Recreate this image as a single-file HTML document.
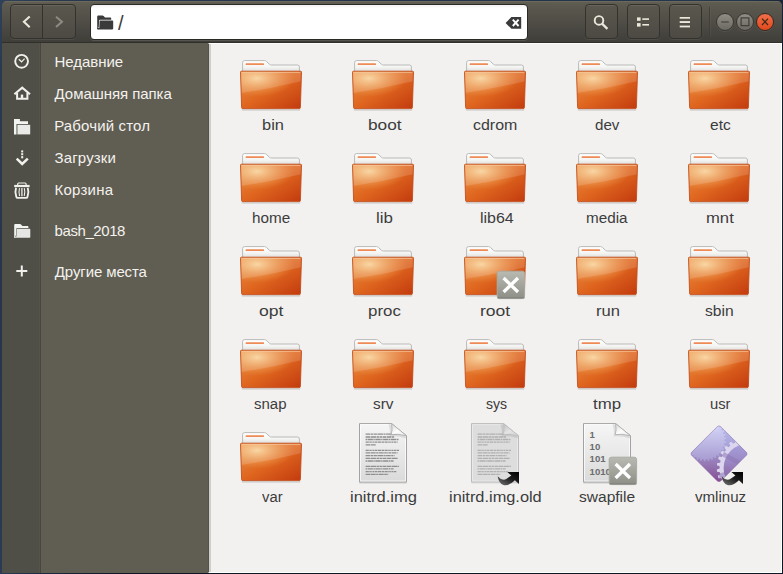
<!DOCTYPE html>
<html lang="ru">
<head>
<meta charset="utf-8">
<title>/</title>
<style>
*{box-sizing:border-box;margin:0;padding:0}
html,body{width:783px;height:574px;overflow:hidden}
body{position:relative;font-family:"Liberation Sans","DejaVu Sans",sans-serif;font-size:15px;
 background:#27354b}
#win{position:absolute;left:2px;top:1px;width:780px;height:572px;border-radius:5px 5px 0 0;overflow:hidden;background:#5a574d}
#hdr{position:absolute;left:0;top:0;width:780px;height:42px;
 background:linear-gradient(180deg,#615e53 0,#5c594f 4px,#4e4c45 22px,#3f3e39 41px);
 box-shadow:inset 0 1px 0 #6b685c,inset 0 -1px 0 #302f2b}
#hdr .btn{position:absolute;top:3.4px;height:35px;border:1px solid #33322d;border-radius:4px;
 background:linear-gradient(180deg,#5a574e 0,#4c4a43 100%);box-shadow:inset 0 1px 0 rgba(255,255,255,.08),0 1px 0 rgba(255,255,255,.07)}
#entry{position:absolute;left:88px;top:3px;width:438px;height:36px;border:1px solid #2b2a26;border-radius:4px;background:linear-gradient(180deg,#f1f1f1 0,#fdfdfd 3px,#fff 6px);box-shadow:0 1px 0 rgba(255,255,255,.11)}
#entry span{position:absolute;left:27px;top:6px;font-size:20px;line-height:24px;color:#3c3c3c}
#side{position:absolute;left:0;top:42px;width:206px;height:530px;background:#605d52}
#strip{position:absolute;left:0;top:0;width:39px;height:530px;background:#504f47;border-right:1px solid #47463f;box-shadow:inset -1px 0 0 #55534b}
.srow{position:absolute;color:#f3f2ee;font-size:15px;line-height:20px;white-space:nowrap}
#content{position:absolute;left:206px;top:42px;width:574px;height:530px;background:#f2f1f0;
 border-left:1px solid #55524a;border-top:1px solid #fcfcfc;border-right:1px solid #fff;border-bottom:1px solid #fff;box-shadow:inset 2px 0 0 #cfcecb}
.lbl{position:absolute;transform-origin:0 50%;color:#3c3c3c;font-size:15.5px;line-height:20px;white-space:nowrap}
.ico{position:absolute;overflow:visible}
.dgt{font-family:"Liberation Sans","DejaVu Sans",sans-serif;font-weight:bold;font-size:9.6px;fill:#6c6c6c}
.wc{position:absolute;top:11.7px;width:18.2px;height:18.2px;border-radius:50%;border:1px solid #383732;background:linear-gradient(180deg,#8f8d84 0,#6b6961 100%);box-shadow:0 1px 0 rgba(255,255,255,.08)}
</style>
</head>
<body>
<svg width="0" height="0" style="position:absolute">
<defs>
<linearGradient id="fb" x1="0" y1="0" x2="0" y2="1"><stop offset="0" stop-color="#fff"/><stop offset=".55" stop-color="#f4f4f3"/><stop offset="1" stop-color="#d9d9d7"/></linearGradient>
<linearGradient id="fo" x1="0" y1="0" x2="1" y2="1"><stop offset="0" stop-color="#ea9044"/><stop offset=".5" stop-color="#df661f"/><stop offset="1" stop-color="#c23a0e"/></linearGradient>
<radialGradient id="fr" cx=".27" cy=".24" r=".62" gradientTransform="scale(1 .8)"><stop offset="0" stop-color="#f9d49a" stop-opacity=".95"/><stop offset="1" stop-color="#f0a050" stop-opacity="0"/></radialGradient>
<linearGradient id="pg" x1="0" y1="0" x2="0" y2="1"><stop offset="0" stop-color="#f6f6f6"/><stop offset="1" stop-color="#dadada"/></linearGradient>
<linearGradient id="pgf" x1="0" y1="0" x2="1" y2="1"><stop offset="0" stop-color="#d8d8d8"/><stop offset=".5" stop-color="#fdfdfd"/><stop offset="1" stop-color="#e6e6e6"/></linearGradient>
<linearGradient id="pgf2" x1="0" y1="0" x2="1" y2="1"><stop offset="0" stop-color="#bdbdbd"/><stop offset=".5" stop-color="#e4e4e4"/><stop offset="1" stop-color="#d2d2d2"/></linearGradient>
<linearGradient id="em" x1="0" y1="0" x2="0" y2="1"><stop offset="0" stop-color="#b9bbb2"/><stop offset="1" stop-color="#8d8f87"/></linearGradient>
<linearGradient id="ar" x1="0" y1="1" x2="1" y2="0"><stop offset="0" stop-color="#7a7a7a"/><stop offset=".55" stop-color="#1c1c1c"/><stop offset="1" stop-color="#000"/></linearGradient>
<linearGradient id="dm" x1="0" y1="0" x2="0" y2="1"><stop offset="0" stop-color="#c6c5ef"/><stop offset=".45" stop-color="#a196cd"/><stop offset=".75" stop-color="#9270ae"/><stop offset="1" stop-color="#864d93"/></linearGradient>
<linearGradient id="dm2" gradientUnits="userSpaceOnUse" x1="0" y1="20" x2="0" y2="58"><stop offset="0" stop-color="#a6a0da"/><stop offset=".5" stop-color="#9a86c2"/><stop offset="1" stop-color="#8b5c9f"/></linearGradient>
<linearGradient id="dg" gradientUnits="userSpaceOnUse" x1="0" y1="2" x2="0" y2="38"><stop offset="0" stop-color="#d6d7f8"/><stop offset="1" stop-color="#aa9fd3"/></linearGradient>
</defs></svg>
<div style="position:absolute;left:0;top:0;width:3px;height:574px;background:linear-gradient(180deg,#2f4259 0,#2a3a51 60px,#27344a 300px,#2a3b53 574px)"></div>
<div style="position:absolute;left:0;top:0;width:783px;height:6px;background:linear-gradient(90deg,#2f4259 0,#27384f 60px,#22324b 400px,#25364f 740px,#1a2538 783px)"></div>
<div style="position:absolute;left:776px;top:6px;width:7px;height:568px;background:linear-gradient(180deg,#18233a 0,#121b2a 40px,#0e1724 568px)"></div>
<div style="position:absolute;left:0;top:573px;width:783px;height:1px;background:linear-gradient(90deg,#2b3d55 0,#1d2a3e 40px,#0e1724 120px)"></div>
<div id="win">
 <div id="hdr">
  <div class="btn" style="left:8px;width:66px"></div>
  <div style="position:absolute;left:40px;top:4px;width:1px;height:33px;background:#33322d"></div>
  <svg class="ico" style="left:8px;top:3px" width="66" height="35" viewBox="0 0 66 35"><path d="M19.7 12.4 L13.9 17.8 L19.7 23.3" fill="none" stroke="#ebe7db" stroke-width="2.1"/><path d="M46 12.8 L52 17.8 L46 23" fill="none" stroke="#8e8b82" stroke-width="2"/></svg>
  <div id="entry"><span>/</span>
   <svg class="ico" style="left:5px;top:9px" width="20" height="18" viewBox="0 0 20 18"><path d="M1.2 2.6 Q1.2 1.6 2.2 1.6 H6.6 Q7.2 1.6 7.6 2 L9 3.5 H14.4 Q15.2 3.5 15.2 4.3 V5.7 H4 Q3.1 5.7 3.1 6.6 L2.8 13.4 L1.9 13.4 L2.3 15.3 H1.2 Z" fill="#3a3a3a"/><path d="M4 6.4 H16.4 Q17.2 6.4 17.2 7.2 V14.6 Q17.2 15.4 16.4 15.4 H2 Q1.2 15.4 1.2 14.6 L1.2 14.1 H3.3 L3.6 6.8 Q3.6 6.4 4 6.4 Z" fill="#3a3a3a"/></svg>
   <svg class="ico" style="left:413px;top:10px" width="20" height="16" viewBox="0 0 20 16"><path d="M1.6 7.9 L7.4 2.1 H17.2 V13.8 H7.4 Z" fill="#3a3a3a"/><path d="M8.8 4.7 L14.6 11 M14.6 4.7 L8.8 11" stroke="#fff" stroke-width="1.9"/></svg>
  </div>
  <div class="btn" style="left:582.5px;width:33px"></div>
  <div class="btn" style="left:624.5px;width:33px"></div>
  <div class="btn" style="left:666.5px;width:33px"></div>
  <svg class="ico" style="left:582px;top:3px" width="120" height="35" viewBox="0 0 120 35"><circle cx="15" cy="16.4" r="4.3" fill="none" stroke="#ebe7db" stroke-width="1.9"/><path d="M18 19.6 L23.4 24.8" stroke="#ebe7db" stroke-width="2.3"/>
  <rect x="53" y="13.4" width="3.6" height="3.4" fill="#ebe7db"/><rect x="53" y="19.1" width="3.6" height="3.5" fill="#ebe7db"/><rect x="58.3" y="14.3" width="6.7" height="1.6" fill="#ebe7db"/><rect x="58.3" y="20" width="6.7" height="1.6" fill="#ebe7db"/>
  <rect x="95.7" y="13" width="10.3" height="1.7" fill="#ebe7db"/><rect x="95.7" y="17.1" width="10.3" height="1.9" fill="#ebe7db"/><rect x="95.7" y="21.6" width="10.3" height="1.8" fill="#ebe7db"/></svg>
  <div style="position:absolute;left:707px;top:6px;width:1px;height:30px;background:#403f39;box-shadow:1px 0 0 rgba(255,255,255,.04)"></div>
  <div class="wc" style="left:713.9px"></div>
  <div class="wc" style="left:733.9px"></div>
  <div class="wc" style="left:753.9px;background:linear-gradient(180deg,#f0704a 0,#e2481c 100%);border-color:#3c2a22"></div>
  <svg class="ico" style="left:713px;top:11px" width="60" height="20" viewBox="0 0 60 20"><path d="M6.2 10 H13.8" stroke="#3a3935" stroke-width="1.2"/><rect x="26.1" y="5.9" width="7.8" height="7.8" fill="none" stroke="#3a3935" stroke-width="1.1"/><path d="M47 6.7 L53 13 M53 6.7 L47 13" stroke="#3a2a16" stroke-width="1.2"/></svg>
 </div>
 <div id="side"><div id="strip"></div>
<svg class="ico" style="left:7.699999999999999px;top:6px" width="24" height="24" viewBox="0 0 24 24"><circle cx="11.6" cy="12.3" r="6.4" fill="none" stroke="#f1f0ec" stroke-width="1.9"/><path d="M8.8 10.2 L11.6 12.8 L14.6 9.7" fill="none" stroke="#f1f0ec" stroke-width="1.2"/></svg>
<div class="srow" style="left:52.4px;top:9px;letter-spacing:-0.027px">Недавние</div>
<svg class="ico" style="left:7.699999999999999px;top:38px" width="24" height="24" viewBox="0 0 24 24"><path d="M4.4 13.3 L12.2 6.6 L20 13.3" fill="none" stroke="#f1f0ec" stroke-width="2.1" stroke-linejoin="miter"/><path d="M7.1 12 V17.7 H17.4 V12" fill="none" stroke="#f1f0ec" stroke-width="2"/><rect x="10.8" y="13.6" width="2.4" height="4.4" fill="#f1f0ec"/></svg>
<div class="srow" style="left:52.6px;top:41px;letter-spacing:-0.054px">Домашняя папка</div>
<svg class="ico" style="left:7.699999999999999px;top:70px" width="24" height="24" viewBox="0 0 24 24"><path d="M4 5.9 H9.9 V8.2 H18 V10.9 H6.5 V21.4 H4 Z" fill="#f3f3f1"/><rect x="7.4" y="11.8" width="12.8" height="9.6" fill="#e9e9e7"/></svg>
<div class="srow" style="left:52.2px;top:73px;letter-spacing:0.146px">Рабочий стол</div>
<svg class="ico" style="left:7.699999999999999px;top:102px" width="24" height="24" viewBox="0 0 24 24"><rect x="11.2" y="5.4" width="2" height="2" fill="#f1f0ec"/><rect x="11.2" y="8.2" width="2" height="2" fill="#f1f0ec"/><rect x="11.2" y="11.1" width="2" height="2.2" fill="#f1f0ec"/><path d="M6.7 13.6 L12.2 19 L17.8 13.6" fill="none" stroke="#f1f0ec" stroke-width="2.5"/></svg>
<div class="srow" style="left:52.6px;top:105px;letter-spacing:0.128px">Загрузки</div>
<svg class="ico" style="left:7.699999999999999px;top:134.6px" width="24" height="24" viewBox="0 0 24 24"><rect x="4.2" y="6.9" width="15.4" height="2.2" fill="#f1f0ec"/><path d="M7.7 6.9 V5.9 Q7.7 5 8.6 5 H15.2 Q16.1 5 16.1 5.9 V6.9" fill="none" stroke="#f1f0ec" stroke-width="1.2"/><path d="M6.1 9.8 Q4.6 14 6.3 18.7 Q6.6 19.9 7.8 19.9 H16 Q17.2 19.9 17.5 18.7 Q19.2 14 17.7 9.8" fill="none" stroke="#f1f0ec" stroke-width="1.9"/><path d="M11.9 10 V18.2" stroke="#f1f0ec" stroke-width="1.3"/><path d="M9.5 10.2 Q8.4 14.2 9.6 18 M14.3 10.2 Q15.4 14.2 14.2 18" fill="none" stroke="#f1f0ec" stroke-width="1.1"/></svg>
<div class="srow" style="left:52.6px;top:137px;letter-spacing:0.21px">Корзина</div>
<svg class="ico" style="left:7.699999999999999px;top:175.9px" width="24" height="24" viewBox="0 0 24 24"><path d="M4.2 6 Q4.2 5 5.2 5 H10 Q10.6 5 11 5.4 L12.4 6.9 H17.6 Q18.4 6.9 18.4 7.7 V9.1 H7.2 Q6.3 9.1 6.3 10 L6 16.8 L5 16.8 L5.4 18.7 H4.2 Z" fill="#f3f3f1"/><path d="M7 9.7 H19.6 Q20.3 9.7 20.3 10.4 V18 Q20.3 18.8 19.5 18.8 H5 Q4.3 18.8 4.3 18 L4.3 17.4 H6.4 L6.7 10 Q6.7 9.7 7 9.7 Z" fill="#e6e6e4"/></svg>
<div class="srow" style="left:52.6px;top:178px;letter-spacing:-0.426px">bash_2018</div>
<svg class="ico" style="left:7.699999999999999px;top:216.39999999999998px" width="24" height="24" viewBox="0 0 24 24"><path d="M6.3 12 H17.3 M11.8 6.5 V17.5" stroke="#f1f0ec" stroke-width="2"/></svg>
<div class="srow" style="left:52.8px;top:219px;letter-spacing:-0.114px">Другие места</div>
 </div>
 <div id="content"></div>
<svg class="ico" style="left:236px;top:56px" width="66" height="56" viewBox="0 0 66 56">
<path d="M3.4 52 L62.6 52 L62 53.7 L4 53.7 Z" fill="#000" opacity=".12"/>
<path d="M4.6 15.5 V5.6 Q4.6 3.6 6.6 3.6 H26.4 Q27.6 3.6 28.4 4.4 L31.6 7.4 Q32.3 8 33.4 8 H59.4 Q61.4 8 61.4 10 V15.5 Z" fill="url(#fb)" stroke="#b9b9b7" stroke-width="1"/>
<rect x="7.6" y="6.3" width="18.4" height="1.7" rx=".6" fill="#ee8b56"/>
<path d="M2.5 15.2 Q2.5 14.2 3.5 14.2 H62.5 Q63.5 14.2 63.5 15.2 L62.4 50.4 Q62.3 51.6 61.2 51.6 H4.8 Q3.7 51.6 3.6 50.4 Z" fill="url(#fo)"/>
<path d="M2.5 15.2 Q2.5 14.2 3.5 14.2 H62.5 Q63.5 14.2 63.5 15.2 L62.4 50.4 Q62.3 51.6 61.2 51.6 H4.8 Q3.7 51.6 3.6 50.4 Z" fill="url(#fr)"/>
<path d="M3 15 H63 L62.75 24.2 Q33 31.4 3.45 36 Z" fill="#fff" opacity=".15"/>
<path d="M2.5 15.2 Q2.5 14.2 3.5 14.2 H62.5 Q63.5 14.2 63.5 15.2 L62.4 50.4 Q62.3 51.6 61.2 51.6 H4.8 Q3.7 51.6 3.6 50.4 Z" fill="none" stroke="#c24a18" stroke-width="1" opacity=".85"/>
<path d="M3.8 15.4 H62.2" stroke="#f6c9a0" stroke-width=".9" opacity=".8" fill="none"/>
</svg>
<div class="lbl" style="left:260.0px;top:114px;transform:scaleX(1.0595)">bin</div>
<svg class="ico" style="left:348px;top:56px" width="66" height="56" viewBox="0 0 66 56">
<path d="M3.4 52 L62.6 52 L62 53.7 L4 53.7 Z" fill="#000" opacity=".12"/>
<path d="M4.6 15.5 V5.6 Q4.6 3.6 6.6 3.6 H26.4 Q27.6 3.6 28.4 4.4 L31.6 7.4 Q32.3 8 33.4 8 H59.4 Q61.4 8 61.4 10 V15.5 Z" fill="url(#fb)" stroke="#b9b9b7" stroke-width="1"/>
<rect x="7.6" y="6.3" width="18.4" height="1.7" rx=".6" fill="#ee8b56"/>
<path d="M2.5 15.2 Q2.5 14.2 3.5 14.2 H62.5 Q63.5 14.2 63.5 15.2 L62.4 50.4 Q62.3 51.6 61.2 51.6 H4.8 Q3.7 51.6 3.6 50.4 Z" fill="url(#fo)"/>
<path d="M2.5 15.2 Q2.5 14.2 3.5 14.2 H62.5 Q63.5 14.2 63.5 15.2 L62.4 50.4 Q62.3 51.6 61.2 51.6 H4.8 Q3.7 51.6 3.6 50.4 Z" fill="url(#fr)"/>
<path d="M3 15 H63 L62.75 24.2 Q33 31.4 3.45 36 Z" fill="#fff" opacity=".15"/>
<path d="M2.5 15.2 Q2.5 14.2 3.5 14.2 H62.5 Q63.5 14.2 63.5 15.2 L62.4 50.4 Q62.3 51.6 61.2 51.6 H4.8 Q3.7 51.6 3.6 50.4 Z" fill="none" stroke="#c24a18" stroke-width="1" opacity=".85"/>
<path d="M3.8 15.4 H62.2" stroke="#f6c9a0" stroke-width=".9" opacity=".8" fill="none"/>
</svg>
<div class="lbl" style="left:365.91px;top:114px;transform:scaleX(1.113)">boot</div>
<svg class="ico" style="left:460px;top:56px" width="66" height="56" viewBox="0 0 66 56">
<path d="M3.4 52 L62.6 52 L62 53.7 L4 53.7 Z" fill="#000" opacity=".12"/>
<path d="M4.6 15.5 V5.6 Q4.6 3.6 6.6 3.6 H26.4 Q27.6 3.6 28.4 4.4 L31.6 7.4 Q32.3 8 33.4 8 H59.4 Q61.4 8 61.4 10 V15.5 Z" fill="url(#fb)" stroke="#b9b9b7" stroke-width="1"/>
<rect x="7.6" y="6.3" width="18.4" height="1.7" rx=".6" fill="#ee8b56"/>
<path d="M2.5 15.2 Q2.5 14.2 3.5 14.2 H62.5 Q63.5 14.2 63.5 15.2 L62.4 50.4 Q62.3 51.6 61.2 51.6 H4.8 Q3.7 51.6 3.6 50.4 Z" fill="url(#fo)"/>
<path d="M2.5 15.2 Q2.5 14.2 3.5 14.2 H62.5 Q63.5 14.2 63.5 15.2 L62.4 50.4 Q62.3 51.6 61.2 51.6 H4.8 Q3.7 51.6 3.6 50.4 Z" fill="url(#fr)"/>
<path d="M3 15 H63 L62.75 24.2 Q33 31.4 3.45 36 Z" fill="#fff" opacity=".15"/>
<path d="M2.5 15.2 Q2.5 14.2 3.5 14.2 H62.5 Q63.5 14.2 63.5 15.2 L62.4 50.4 Q62.3 51.6 61.2 51.6 H4.8 Q3.7 51.6 3.6 50.4 Z" fill="none" stroke="#c24a18" stroke-width="1" opacity=".85"/>
<path d="M3.8 15.4 H62.2" stroke="#f6c9a0" stroke-width=".9" opacity=".8" fill="none"/>
</svg>
<div class="lbl" style="left:470.86px;top:114px;transform:scaleX(1.0303)">cdrom</div>
<svg class="ico" style="left:572px;top:56px" width="66" height="56" viewBox="0 0 66 56">
<path d="M3.4 52 L62.6 52 L62 53.7 L4 53.7 Z" fill="#000" opacity=".12"/>
<path d="M4.6 15.5 V5.6 Q4.6 3.6 6.6 3.6 H26.4 Q27.6 3.6 28.4 4.4 L31.6 7.4 Q32.3 8 33.4 8 H59.4 Q61.4 8 61.4 10 V15.5 Z" fill="url(#fb)" stroke="#b9b9b7" stroke-width="1"/>
<rect x="7.6" y="6.3" width="18.4" height="1.7" rx=".6" fill="#ee8b56"/>
<path d="M2.5 15.2 Q2.5 14.2 3.5 14.2 H62.5 Q63.5 14.2 63.5 15.2 L62.4 50.4 Q62.3 51.6 61.2 51.6 H4.8 Q3.7 51.6 3.6 50.4 Z" fill="url(#fo)"/>
<path d="M2.5 15.2 Q2.5 14.2 3.5 14.2 H62.5 Q63.5 14.2 63.5 15.2 L62.4 50.4 Q62.3 51.6 61.2 51.6 H4.8 Q3.7 51.6 3.6 50.4 Z" fill="url(#fr)"/>
<path d="M3 15 H63 L62.75 24.2 Q33 31.4 3.45 36 Z" fill="#fff" opacity=".15"/>
<path d="M2.5 15.2 Q2.5 14.2 3.5 14.2 H62.5 Q63.5 14.2 63.5 15.2 L62.4 50.4 Q62.3 51.6 61.2 51.6 H4.8 Q3.7 51.6 3.6 50.4 Z" fill="none" stroke="#c24a18" stroke-width="1" opacity=".85"/>
<path d="M3.8 15.4 H62.2" stroke="#f6c9a0" stroke-width=".9" opacity=".8" fill="none"/>
</svg>
<div class="lbl" style="left:592.78px;top:114px;transform:scaleX(0.9765)">dev</div>
<svg class="ico" style="left:684px;top:56px" width="66" height="56" viewBox="0 0 66 56">
<path d="M3.4 52 L62.6 52 L62 53.7 L4 53.7 Z" fill="#000" opacity=".12"/>
<path d="M4.6 15.5 V5.6 Q4.6 3.6 6.6 3.6 H26.4 Q27.6 3.6 28.4 4.4 L31.6 7.4 Q32.3 8 33.4 8 H59.4 Q61.4 8 61.4 10 V15.5 Z" fill="url(#fb)" stroke="#b9b9b7" stroke-width="1"/>
<rect x="7.6" y="6.3" width="18.4" height="1.7" rx=".6" fill="#ee8b56"/>
<path d="M2.5 15.2 Q2.5 14.2 3.5 14.2 H62.5 Q63.5 14.2 63.5 15.2 L62.4 50.4 Q62.3 51.6 61.2 51.6 H4.8 Q3.7 51.6 3.6 50.4 Z" fill="url(#fo)"/>
<path d="M2.5 15.2 Q2.5 14.2 3.5 14.2 H62.5 Q63.5 14.2 63.5 15.2 L62.4 50.4 Q62.3 51.6 61.2 51.6 H4.8 Q3.7 51.6 3.6 50.4 Z" fill="url(#fr)"/>
<path d="M3 15 H63 L62.75 24.2 Q33 31.4 3.45 36 Z" fill="#fff" opacity=".15"/>
<path d="M2.5 15.2 Q2.5 14.2 3.5 14.2 H62.5 Q63.5 14.2 63.5 15.2 L62.4 50.4 Q62.3 51.6 61.2 51.6 H4.8 Q3.7 51.6 3.6 50.4 Z" fill="none" stroke="#c24a18" stroke-width="1" opacity=".85"/>
<path d="M3.8 15.4 H62.2" stroke="#f6c9a0" stroke-width=".9" opacity=".8" fill="none"/>
</svg>
<div class="lbl" style="left:708.34px;top:114px;transform:scaleX(1.0042)">etc</div>
<svg class="ico" style="left:236px;top:149px" width="66" height="56" viewBox="0 0 66 56">
<path d="M3.4 52 L62.6 52 L62 53.7 L4 53.7 Z" fill="#000" opacity=".12"/>
<path d="M4.6 15.5 V5.6 Q4.6 3.6 6.6 3.6 H26.4 Q27.6 3.6 28.4 4.4 L31.6 7.4 Q32.3 8 33.4 8 H59.4 Q61.4 8 61.4 10 V15.5 Z" fill="url(#fb)" stroke="#b9b9b7" stroke-width="1"/>
<rect x="7.6" y="6.3" width="18.4" height="1.7" rx=".6" fill="#ee8b56"/>
<path d="M2.5 15.2 Q2.5 14.2 3.5 14.2 H62.5 Q63.5 14.2 63.5 15.2 L62.4 50.4 Q62.3 51.6 61.2 51.6 H4.8 Q3.7 51.6 3.6 50.4 Z" fill="url(#fo)"/>
<path d="M2.5 15.2 Q2.5 14.2 3.5 14.2 H62.5 Q63.5 14.2 63.5 15.2 L62.4 50.4 Q62.3 51.6 61.2 51.6 H4.8 Q3.7 51.6 3.6 50.4 Z" fill="url(#fr)"/>
<path d="M3 15 H63 L62.75 24.2 Q33 31.4 3.45 36 Z" fill="#fff" opacity=".15"/>
<path d="M2.5 15.2 Q2.5 14.2 3.5 14.2 H62.5 Q63.5 14.2 63.5 15.2 L62.4 50.4 Q62.3 51.6 61.2 51.6 H4.8 Q3.7 51.6 3.6 50.4 Z" fill="none" stroke="#c24a18" stroke-width="1" opacity=".85"/>
<path d="M3.8 15.4 H62.2" stroke="#f6c9a0" stroke-width=".9" opacity=".8" fill="none"/>
</svg>
<div class="lbl" style="left:249.72px;top:207px;transform:scaleX(0.9846)">home</div>
<svg class="ico" style="left:348px;top:149px" width="66" height="56" viewBox="0 0 66 56">
<path d="M3.4 52 L62.6 52 L62 53.7 L4 53.7 Z" fill="#000" opacity=".12"/>
<path d="M4.6 15.5 V5.6 Q4.6 3.6 6.6 3.6 H26.4 Q27.6 3.6 28.4 4.4 L31.6 7.4 Q32.3 8 33.4 8 H59.4 Q61.4 8 61.4 10 V15.5 Z" fill="url(#fb)" stroke="#b9b9b7" stroke-width="1"/>
<rect x="7.6" y="6.3" width="18.4" height="1.7" rx=".6" fill="#ee8b56"/>
<path d="M2.5 15.2 Q2.5 14.2 3.5 14.2 H62.5 Q63.5 14.2 63.5 15.2 L62.4 50.4 Q62.3 51.6 61.2 51.6 H4.8 Q3.7 51.6 3.6 50.4 Z" fill="url(#fo)"/>
<path d="M2.5 15.2 Q2.5 14.2 3.5 14.2 H62.5 Q63.5 14.2 63.5 15.2 L62.4 50.4 Q62.3 51.6 61.2 51.6 H4.8 Q3.7 51.6 3.6 50.4 Z" fill="url(#fr)"/>
<path d="M3 15 H63 L62.75 24.2 Q33 31.4 3.45 36 Z" fill="#fff" opacity=".15"/>
<path d="M2.5 15.2 Q2.5 14.2 3.5 14.2 H62.5 Q63.5 14.2 63.5 15.2 L62.4 50.4 Q62.3 51.6 61.2 51.6 H4.8 Q3.7 51.6 3.6 50.4 Z" fill="none" stroke="#c24a18" stroke-width="1" opacity=".85"/>
<path d="M3.8 15.4 H62.2" stroke="#f6c9a0" stroke-width=".9" opacity=".8" fill="none"/>
</svg>
<div class="lbl" style="left:374.47px;top:207px;transform:scaleX(1.0924)">lib</div>
<svg class="ico" style="left:460px;top:149px" width="66" height="56" viewBox="0 0 66 56">
<path d="M3.4 52 L62.6 52 L62 53.7 L4 53.7 Z" fill="#000" opacity=".12"/>
<path d="M4.6 15.5 V5.6 Q4.6 3.6 6.6 3.6 H26.4 Q27.6 3.6 28.4 4.4 L31.6 7.4 Q32.3 8 33.4 8 H59.4 Q61.4 8 61.4 10 V15.5 Z" fill="url(#fb)" stroke="#b9b9b7" stroke-width="1"/>
<rect x="7.6" y="6.3" width="18.4" height="1.7" rx=".6" fill="#ee8b56"/>
<path d="M2.5 15.2 Q2.5 14.2 3.5 14.2 H62.5 Q63.5 14.2 63.5 15.2 L62.4 50.4 Q62.3 51.6 61.2 51.6 H4.8 Q3.7 51.6 3.6 50.4 Z" fill="url(#fo)"/>
<path d="M2.5 15.2 Q2.5 14.2 3.5 14.2 H62.5 Q63.5 14.2 63.5 15.2 L62.4 50.4 Q62.3 51.6 61.2 51.6 H4.8 Q3.7 51.6 3.6 50.4 Z" fill="url(#fr)"/>
<path d="M3 15 H63 L62.75 24.2 Q33 31.4 3.45 36 Z" fill="#fff" opacity=".15"/>
<path d="M2.5 15.2 Q2.5 14.2 3.5 14.2 H62.5 Q63.5 14.2 63.5 15.2 L62.4 50.4 Q62.3 51.6 61.2 51.6 H4.8 Q3.7 51.6 3.6 50.4 Z" fill="none" stroke="#c24a18" stroke-width="1" opacity=".85"/>
<path d="M3.8 15.4 H62.2" stroke="#f6c9a0" stroke-width=".9" opacity=".8" fill="none"/>
</svg>
<div class="lbl" style="left:477.76px;top:207px;transform:scaleX(1.0302)">lib64</div>
<svg class="ico" style="left:572px;top:149px" width="66" height="56" viewBox="0 0 66 56">
<path d="M3.4 52 L62.6 52 L62 53.7 L4 53.7 Z" fill="#000" opacity=".12"/>
<path d="M4.6 15.5 V5.6 Q4.6 3.6 6.6 3.6 H26.4 Q27.6 3.6 28.4 4.4 L31.6 7.4 Q32.3 8 33.4 8 H59.4 Q61.4 8 61.4 10 V15.5 Z" fill="url(#fb)" stroke="#b9b9b7" stroke-width="1"/>
<rect x="7.6" y="6.3" width="18.4" height="1.7" rx=".6" fill="#ee8b56"/>
<path d="M2.5 15.2 Q2.5 14.2 3.5 14.2 H62.5 Q63.5 14.2 63.5 15.2 L62.4 50.4 Q62.3 51.6 61.2 51.6 H4.8 Q3.7 51.6 3.6 50.4 Z" fill="url(#fo)"/>
<path d="M2.5 15.2 Q2.5 14.2 3.5 14.2 H62.5 Q63.5 14.2 63.5 15.2 L62.4 50.4 Q62.3 51.6 61.2 51.6 H4.8 Q3.7 51.6 3.6 50.4 Z" fill="url(#fr)"/>
<path d="M3 15 H63 L62.75 24.2 Q33 31.4 3.45 36 Z" fill="#fff" opacity=".15"/>
<path d="M2.5 15.2 Q2.5 14.2 3.5 14.2 H62.5 Q63.5 14.2 63.5 15.2 L62.4 50.4 Q62.3 51.6 61.2 51.6 H4.8 Q3.7 51.6 3.6 50.4 Z" fill="none" stroke="#c24a18" stroke-width="1" opacity=".85"/>
<path d="M3.8 15.4 H62.2" stroke="#f6c9a0" stroke-width=".9" opacity=".8" fill="none"/>
</svg>
<div class="lbl" style="left:583.78px;top:207px;transform:scaleX(0.9832)">media</div>
<svg class="ico" style="left:684px;top:149px" width="66" height="56" viewBox="0 0 66 56">
<path d="M3.4 52 L62.6 52 L62 53.7 L4 53.7 Z" fill="#000" opacity=".12"/>
<path d="M4.6 15.5 V5.6 Q4.6 3.6 6.6 3.6 H26.4 Q27.6 3.6 28.4 4.4 L31.6 7.4 Q32.3 8 33.4 8 H59.4 Q61.4 8 61.4 10 V15.5 Z" fill="url(#fb)" stroke="#b9b9b7" stroke-width="1"/>
<rect x="7.6" y="6.3" width="18.4" height="1.7" rx=".6" fill="#ee8b56"/>
<path d="M2.5 15.2 Q2.5 14.2 3.5 14.2 H62.5 Q63.5 14.2 63.5 15.2 L62.4 50.4 Q62.3 51.6 61.2 51.6 H4.8 Q3.7 51.6 3.6 50.4 Z" fill="url(#fo)"/>
<path d="M2.5 15.2 Q2.5 14.2 3.5 14.2 H62.5 Q63.5 14.2 63.5 15.2 L62.4 50.4 Q62.3 51.6 61.2 51.6 H4.8 Q3.7 51.6 3.6 50.4 Z" fill="url(#fr)"/>
<path d="M3 15 H63 L62.75 24.2 Q33 31.4 3.45 36 Z" fill="#fff" opacity=".15"/>
<path d="M2.5 15.2 Q2.5 14.2 3.5 14.2 H62.5 Q63.5 14.2 63.5 15.2 L62.4 50.4 Q62.3 51.6 61.2 51.6 H4.8 Q3.7 51.6 3.6 50.4 Z" fill="none" stroke="#c24a18" stroke-width="1" opacity=".85"/>
<path d="M3.8 15.4 H62.2" stroke="#f6c9a0" stroke-width=".9" opacity=".8" fill="none"/>
</svg>
<div class="lbl" style="left:704.36px;top:207px;transform:scaleX(1.0744)">mnt</div>
<svg class="ico" style="left:236px;top:242px" width="66" height="56" viewBox="0 0 66 56">
<path d="M3.4 52 L62.6 52 L62 53.7 L4 53.7 Z" fill="#000" opacity=".12"/>
<path d="M4.6 15.5 V5.6 Q4.6 3.6 6.6 3.6 H26.4 Q27.6 3.6 28.4 4.4 L31.6 7.4 Q32.3 8 33.4 8 H59.4 Q61.4 8 61.4 10 V15.5 Z" fill="url(#fb)" stroke="#b9b9b7" stroke-width="1"/>
<rect x="7.6" y="6.3" width="18.4" height="1.7" rx=".6" fill="#ee8b56"/>
<path d="M2.5 15.2 Q2.5 14.2 3.5 14.2 H62.5 Q63.5 14.2 63.5 15.2 L62.4 50.4 Q62.3 51.6 61.2 51.6 H4.8 Q3.7 51.6 3.6 50.4 Z" fill="url(#fo)"/>
<path d="M2.5 15.2 Q2.5 14.2 3.5 14.2 H62.5 Q63.5 14.2 63.5 15.2 L62.4 50.4 Q62.3 51.6 61.2 51.6 H4.8 Q3.7 51.6 3.6 50.4 Z" fill="url(#fr)"/>
<path d="M3 15 H63 L62.75 24.2 Q33 31.4 3.45 36 Z" fill="#fff" opacity=".15"/>
<path d="M2.5 15.2 Q2.5 14.2 3.5 14.2 H62.5 Q63.5 14.2 63.5 15.2 L62.4 50.4 Q62.3 51.6 61.2 51.6 H4.8 Q3.7 51.6 3.6 50.4 Z" fill="none" stroke="#c24a18" stroke-width="1" opacity=".85"/>
<path d="M3.8 15.4 H62.2" stroke="#f6c9a0" stroke-width=".9" opacity=".8" fill="none"/>
</svg>
<div class="lbl" style="left:256.52px;top:300px;transform:scaleX(1.1321)">opt</div>
<svg class="ico" style="left:348px;top:242px" width="66" height="56" viewBox="0 0 66 56">
<path d="M3.4 52 L62.6 52 L62 53.7 L4 53.7 Z" fill="#000" opacity=".12"/>
<path d="M4.6 15.5 V5.6 Q4.6 3.6 6.6 3.6 H26.4 Q27.6 3.6 28.4 4.4 L31.6 7.4 Q32.3 8 33.4 8 H59.4 Q61.4 8 61.4 10 V15.5 Z" fill="url(#fb)" stroke="#b9b9b7" stroke-width="1"/>
<rect x="7.6" y="6.3" width="18.4" height="1.7" rx=".6" fill="#ee8b56"/>
<path d="M2.5 15.2 Q2.5 14.2 3.5 14.2 H62.5 Q63.5 14.2 63.5 15.2 L62.4 50.4 Q62.3 51.6 61.2 51.6 H4.8 Q3.7 51.6 3.6 50.4 Z" fill="url(#fo)"/>
<path d="M2.5 15.2 Q2.5 14.2 3.5 14.2 H62.5 Q63.5 14.2 63.5 15.2 L62.4 50.4 Q62.3 51.6 61.2 51.6 H4.8 Q3.7 51.6 3.6 50.4 Z" fill="url(#fr)"/>
<path d="M3 15 H63 L62.75 24.2 Q33 31.4 3.45 36 Z" fill="#fff" opacity=".15"/>
<path d="M2.5 15.2 Q2.5 14.2 3.5 14.2 H62.5 Q63.5 14.2 63.5 15.2 L62.4 50.4 Q62.3 51.6 61.2 51.6 H4.8 Q3.7 51.6 3.6 50.4 Z" fill="none" stroke="#c24a18" stroke-width="1" opacity=".85"/>
<path d="M3.8 15.4 H62.2" stroke="#f6c9a0" stroke-width=".9" opacity=".8" fill="none"/>
</svg>
<div class="lbl" style="left:366.24px;top:300px;transform:scaleX(1.0902)">proc</div>
<svg class="ico" style="left:460px;top:242px" width="66" height="56" viewBox="0 0 66 56">
<path d="M3.4 52 L62.6 52 L62 53.7 L4 53.7 Z" fill="#000" opacity=".12"/>
<path d="M4.6 15.5 V5.6 Q4.6 3.6 6.6 3.6 H26.4 Q27.6 3.6 28.4 4.4 L31.6 7.4 Q32.3 8 33.4 8 H59.4 Q61.4 8 61.4 10 V15.5 Z" fill="url(#fb)" stroke="#b9b9b7" stroke-width="1"/>
<rect x="7.6" y="6.3" width="18.4" height="1.7" rx=".6" fill="#ee8b56"/>
<path d="M2.5 15.2 Q2.5 14.2 3.5 14.2 H62.5 Q63.5 14.2 63.5 15.2 L62.4 50.4 Q62.3 51.6 61.2 51.6 H4.8 Q3.7 51.6 3.6 50.4 Z" fill="url(#fo)"/>
<path d="M2.5 15.2 Q2.5 14.2 3.5 14.2 H62.5 Q63.5 14.2 63.5 15.2 L62.4 50.4 Q62.3 51.6 61.2 51.6 H4.8 Q3.7 51.6 3.6 50.4 Z" fill="url(#fr)"/>
<path d="M3 15 H63 L62.75 24.2 Q33 31.4 3.45 36 Z" fill="#fff" opacity=".15"/>
<path d="M2.5 15.2 Q2.5 14.2 3.5 14.2 H62.5 Q63.5 14.2 63.5 15.2 L62.4 50.4 Q62.3 51.6 61.2 51.6 H4.8 Q3.7 51.6 3.6 50.4 Z" fill="none" stroke="#c24a18" stroke-width="1" opacity=".85"/>
<path d="M3.8 15.4 H62.2" stroke="#f6c9a0" stroke-width=".9" opacity=".8" fill="none"/>
</svg>
<svg class="ico" style="left:494px;top:269px" width="30" height="30" viewBox="0 0 30 30">
<rect x="1.2" y="1.2" width="27.4" height="27.4" rx="2.4" fill="url(#em)" stroke="#a9aba3" stroke-width="1"/>
<rect x="1.2" y="27" width="27.4" height="1.8" rx="1" fill="#7d7f78" opacity=".6"/>
<path d="M7.6 8 L22 22 M22 8 L7.6 22" stroke="#fff" stroke-width="3.3" stroke-linecap="butt"/>
</svg>
<div class="lbl" style="left:477.57px;top:300px;transform:scaleX(1.1321)">root</div>
<svg class="ico" style="left:572px;top:242px" width="66" height="56" viewBox="0 0 66 56">
<path d="M3.4 52 L62.6 52 L62 53.7 L4 53.7 Z" fill="#000" opacity=".12"/>
<path d="M4.6 15.5 V5.6 Q4.6 3.6 6.6 3.6 H26.4 Q27.6 3.6 28.4 4.4 L31.6 7.4 Q32.3 8 33.4 8 H59.4 Q61.4 8 61.4 10 V15.5 Z" fill="url(#fb)" stroke="#b9b9b7" stroke-width="1"/>
<rect x="7.6" y="6.3" width="18.4" height="1.7" rx=".6" fill="#ee8b56"/>
<path d="M2.5 15.2 Q2.5 14.2 3.5 14.2 H62.5 Q63.5 14.2 63.5 15.2 L62.4 50.4 Q62.3 51.6 61.2 51.6 H4.8 Q3.7 51.6 3.6 50.4 Z" fill="url(#fo)"/>
<path d="M2.5 15.2 Q2.5 14.2 3.5 14.2 H62.5 Q63.5 14.2 63.5 15.2 L62.4 50.4 Q62.3 51.6 61.2 51.6 H4.8 Q3.7 51.6 3.6 50.4 Z" fill="url(#fr)"/>
<path d="M3 15 H63 L62.75 24.2 Q33 31.4 3.45 36 Z" fill="#fff" opacity=".15"/>
<path d="M2.5 15.2 Q2.5 14.2 3.5 14.2 H62.5 Q63.5 14.2 63.5 15.2 L62.4 50.4 Q62.3 51.6 61.2 51.6 H4.8 Q3.7 51.6 3.6 50.4 Z" fill="none" stroke="#c24a18" stroke-width="1" opacity=".85"/>
<path d="M3.8 15.4 H62.2" stroke="#f6c9a0" stroke-width=".9" opacity=".8" fill="none"/>
</svg>
<div class="lbl" style="left:593.76px;top:300px;transform:scaleX(1.0691)">run</div>
<svg class="ico" style="left:684px;top:242px" width="66" height="56" viewBox="0 0 66 56">
<path d="M3.4 52 L62.6 52 L62 53.7 L4 53.7 Z" fill="#000" opacity=".12"/>
<path d="M4.6 15.5 V5.6 Q4.6 3.6 6.6 3.6 H26.4 Q27.6 3.6 28.4 4.4 L31.6 7.4 Q32.3 8 33.4 8 H59.4 Q61.4 8 61.4 10 V15.5 Z" fill="url(#fb)" stroke="#b9b9b7" stroke-width="1"/>
<rect x="7.6" y="6.3" width="18.4" height="1.7" rx=".6" fill="#ee8b56"/>
<path d="M2.5 15.2 Q2.5 14.2 3.5 14.2 H62.5 Q63.5 14.2 63.5 15.2 L62.4 50.4 Q62.3 51.6 61.2 51.6 H4.8 Q3.7 51.6 3.6 50.4 Z" fill="url(#fo)"/>
<path d="M2.5 15.2 Q2.5 14.2 3.5 14.2 H62.5 Q63.5 14.2 63.5 15.2 L62.4 50.4 Q62.3 51.6 61.2 51.6 H4.8 Q3.7 51.6 3.6 50.4 Z" fill="url(#fr)"/>
<path d="M3 15 H63 L62.75 24.2 Q33 31.4 3.45 36 Z" fill="#fff" opacity=".15"/>
<path d="M2.5 15.2 Q2.5 14.2 3.5 14.2 H62.5 Q63.5 14.2 63.5 15.2 L62.4 50.4 Q62.3 51.6 61.2 51.6 H4.8 Q3.7 51.6 3.6 50.4 Z" fill="none" stroke="#c24a18" stroke-width="1" opacity=".85"/>
<path d="M3.8 15.4 H62.2" stroke="#f6c9a0" stroke-width=".9" opacity=".8" fill="none"/>
</svg>
<div class="lbl" style="left:703.1px;top:300px;transform:scaleX(1.0074)">sbin</div>
<svg class="ico" style="left:236px;top:335px" width="66" height="56" viewBox="0 0 66 56">
<path d="M3.4 52 L62.6 52 L62 53.7 L4 53.7 Z" fill="#000" opacity=".12"/>
<path d="M4.6 15.5 V5.6 Q4.6 3.6 6.6 3.6 H26.4 Q27.6 3.6 28.4 4.4 L31.6 7.4 Q32.3 8 33.4 8 H59.4 Q61.4 8 61.4 10 V15.5 Z" fill="url(#fb)" stroke="#b9b9b7" stroke-width="1"/>
<rect x="7.6" y="6.3" width="18.4" height="1.7" rx=".6" fill="#ee8b56"/>
<path d="M2.5 15.2 Q2.5 14.2 3.5 14.2 H62.5 Q63.5 14.2 63.5 15.2 L62.4 50.4 Q62.3 51.6 61.2 51.6 H4.8 Q3.7 51.6 3.6 50.4 Z" fill="url(#fo)"/>
<path d="M2.5 15.2 Q2.5 14.2 3.5 14.2 H62.5 Q63.5 14.2 63.5 15.2 L62.4 50.4 Q62.3 51.6 61.2 51.6 H4.8 Q3.7 51.6 3.6 50.4 Z" fill="url(#fr)"/>
<path d="M3 15 H63 L62.75 24.2 Q33 31.4 3.45 36 Z" fill="#fff" opacity=".15"/>
<path d="M2.5 15.2 Q2.5 14.2 3.5 14.2 H62.5 Q63.5 14.2 63.5 15.2 L62.4 50.4 Q62.3 51.6 61.2 51.6 H4.8 Q3.7 51.6 3.6 50.4 Z" fill="none" stroke="#c24a18" stroke-width="1" opacity=".85"/>
<path d="M3.8 15.4 H62.2" stroke="#f6c9a0" stroke-width=".9" opacity=".8" fill="none"/>
</svg>
<div class="lbl" style="left:252.19px;top:393px;transform:scaleX(0.9666)">snap</div>
<svg class="ico" style="left:348px;top:335px" width="66" height="56" viewBox="0 0 66 56">
<path d="M3.4 52 L62.6 52 L62 53.7 L4 53.7 Z" fill="#000" opacity=".12"/>
<path d="M4.6 15.5 V5.6 Q4.6 3.6 6.6 3.6 H26.4 Q27.6 3.6 28.4 4.4 L31.6 7.4 Q32.3 8 33.4 8 H59.4 Q61.4 8 61.4 10 V15.5 Z" fill="url(#fb)" stroke="#b9b9b7" stroke-width="1"/>
<rect x="7.6" y="6.3" width="18.4" height="1.7" rx=".6" fill="#ee8b56"/>
<path d="M2.5 15.2 Q2.5 14.2 3.5 14.2 H62.5 Q63.5 14.2 63.5 15.2 L62.4 50.4 Q62.3 51.6 61.2 51.6 H4.8 Q3.7 51.6 3.6 50.4 Z" fill="url(#fo)"/>
<path d="M2.5 15.2 Q2.5 14.2 3.5 14.2 H62.5 Q63.5 14.2 63.5 15.2 L62.4 50.4 Q62.3 51.6 61.2 51.6 H4.8 Q3.7 51.6 3.6 50.4 Z" fill="url(#fr)"/>
<path d="M3 15 H63 L62.75 24.2 Q33 31.4 3.45 36 Z" fill="#fff" opacity=".15"/>
<path d="M2.5 15.2 Q2.5 14.2 3.5 14.2 H62.5 Q63.5 14.2 63.5 15.2 L62.4 50.4 Q62.3 51.6 61.2 51.6 H4.8 Q3.7 51.6 3.6 50.4 Z" fill="none" stroke="#c24a18" stroke-width="1" opacity=".85"/>
<path d="M3.8 15.4 H62.2" stroke="#f6c9a0" stroke-width=".9" opacity=".8" fill="none"/>
</svg>
<div class="lbl" style="left:371.15px;top:393px;transform:scaleX(0.9893)">srv</div>
<svg class="ico" style="left:460px;top:335px" width="66" height="56" viewBox="0 0 66 56">
<path d="M3.4 52 L62.6 52 L62 53.7 L4 53.7 Z" fill="#000" opacity=".12"/>
<path d="M4.6 15.5 V5.6 Q4.6 3.6 6.6 3.6 H26.4 Q27.6 3.6 28.4 4.4 L31.6 7.4 Q32.3 8 33.4 8 H59.4 Q61.4 8 61.4 10 V15.5 Z" fill="url(#fb)" stroke="#b9b9b7" stroke-width="1"/>
<rect x="7.6" y="6.3" width="18.4" height="1.7" rx=".6" fill="#ee8b56"/>
<path d="M2.5 15.2 Q2.5 14.2 3.5 14.2 H62.5 Q63.5 14.2 63.5 15.2 L62.4 50.4 Q62.3 51.6 61.2 51.6 H4.8 Q3.7 51.6 3.6 50.4 Z" fill="url(#fo)"/>
<path d="M2.5 15.2 Q2.5 14.2 3.5 14.2 H62.5 Q63.5 14.2 63.5 15.2 L62.4 50.4 Q62.3 51.6 61.2 51.6 H4.8 Q3.7 51.6 3.6 50.4 Z" fill="url(#fr)"/>
<path d="M3 15 H63 L62.75 24.2 Q33 31.4 3.45 36 Z" fill="#fff" opacity=".15"/>
<path d="M2.5 15.2 Q2.5 14.2 3.5 14.2 H62.5 Q63.5 14.2 63.5 15.2 L62.4 50.4 Q62.3 51.6 61.2 51.6 H4.8 Q3.7 51.6 3.6 50.4 Z" fill="none" stroke="#c24a18" stroke-width="1" opacity=".85"/>
<path d="M3.8 15.4 H62.2" stroke="#f6c9a0" stroke-width=".9" opacity=".8" fill="none"/>
</svg>
<div class="lbl" style="left:484.28px;top:393px;transform:scaleX(0.907)">sys</div>
<svg class="ico" style="left:572px;top:335px" width="66" height="56" viewBox="0 0 66 56">
<path d="M3.4 52 L62.6 52 L62 53.7 L4 53.7 Z" fill="#000" opacity=".12"/>
<path d="M4.6 15.5 V5.6 Q4.6 3.6 6.6 3.6 H26.4 Q27.6 3.6 28.4 4.4 L31.6 7.4 Q32.3 8 33.4 8 H59.4 Q61.4 8 61.4 10 V15.5 Z" fill="url(#fb)" stroke="#b9b9b7" stroke-width="1"/>
<rect x="7.6" y="6.3" width="18.4" height="1.7" rx=".6" fill="#ee8b56"/>
<path d="M2.5 15.2 Q2.5 14.2 3.5 14.2 H62.5 Q63.5 14.2 63.5 15.2 L62.4 50.4 Q62.3 51.6 61.2 51.6 H4.8 Q3.7 51.6 3.6 50.4 Z" fill="url(#fo)"/>
<path d="M2.5 15.2 Q2.5 14.2 3.5 14.2 H62.5 Q63.5 14.2 63.5 15.2 L62.4 50.4 Q62.3 51.6 61.2 51.6 H4.8 Q3.7 51.6 3.6 50.4 Z" fill="url(#fr)"/>
<path d="M3 15 H63 L62.75 24.2 Q33 31.4 3.45 36 Z" fill="#fff" opacity=".15"/>
<path d="M2.5 15.2 Q2.5 14.2 3.5 14.2 H62.5 Q63.5 14.2 63.5 15.2 L62.4 50.4 Q62.3 51.6 61.2 51.6 H4.8 Q3.7 51.6 3.6 50.4 Z" fill="none" stroke="#c24a18" stroke-width="1" opacity=".85"/>
<path d="M3.8 15.4 H62.2" stroke="#f6c9a0" stroke-width=".9" opacity=".8" fill="none"/>
</svg>
<div class="lbl" style="left:591.0px;top:393px;transform:scaleX(1.0838)">tmp</div>
<svg class="ico" style="left:684px;top:335px" width="66" height="56" viewBox="0 0 66 56">
<path d="M3.4 52 L62.6 52 L62 53.7 L4 53.7 Z" fill="#000" opacity=".12"/>
<path d="M4.6 15.5 V5.6 Q4.6 3.6 6.6 3.6 H26.4 Q27.6 3.6 28.4 4.4 L31.6 7.4 Q32.3 8 33.4 8 H59.4 Q61.4 8 61.4 10 V15.5 Z" fill="url(#fb)" stroke="#b9b9b7" stroke-width="1"/>
<rect x="7.6" y="6.3" width="18.4" height="1.7" rx=".6" fill="#ee8b56"/>
<path d="M2.5 15.2 Q2.5 14.2 3.5 14.2 H62.5 Q63.5 14.2 63.5 15.2 L62.4 50.4 Q62.3 51.6 61.2 51.6 H4.8 Q3.7 51.6 3.6 50.4 Z" fill="url(#fo)"/>
<path d="M2.5 15.2 Q2.5 14.2 3.5 14.2 H62.5 Q63.5 14.2 63.5 15.2 L62.4 50.4 Q62.3 51.6 61.2 51.6 H4.8 Q3.7 51.6 3.6 50.4 Z" fill="url(#fr)"/>
<path d="M3 15 H63 L62.75 24.2 Q33 31.4 3.45 36 Z" fill="#fff" opacity=".15"/>
<path d="M2.5 15.2 Q2.5 14.2 3.5 14.2 H62.5 Q63.5 14.2 63.5 15.2 L62.4 50.4 Q62.3 51.6 61.2 51.6 H4.8 Q3.7 51.6 3.6 50.4 Z" fill="none" stroke="#c24a18" stroke-width="1" opacity=".85"/>
<path d="M3.8 15.4 H62.2" stroke="#f6c9a0" stroke-width=".9" opacity=".8" fill="none"/>
</svg>
<div class="lbl" style="left:708.47px;top:393px;transform:scaleX(0.9529)">usr</div>
<svg class="ico" style="left:236px;top:428px" width="66" height="56" viewBox="0 0 66 56">
<path d="M3.4 52 L62.6 52 L62 53.7 L4 53.7 Z" fill="#000" opacity=".12"/>
<path d="M4.6 15.5 V5.6 Q4.6 3.6 6.6 3.6 H26.4 Q27.6 3.6 28.4 4.4 L31.6 7.4 Q32.3 8 33.4 8 H59.4 Q61.4 8 61.4 10 V15.5 Z" fill="url(#fb)" stroke="#b9b9b7" stroke-width="1"/>
<rect x="7.6" y="6.3" width="18.4" height="1.7" rx=".6" fill="#ee8b56"/>
<path d="M2.5 15.2 Q2.5 14.2 3.5 14.2 H62.5 Q63.5 14.2 63.5 15.2 L62.4 50.4 Q62.3 51.6 61.2 51.6 H4.8 Q3.7 51.6 3.6 50.4 Z" fill="url(#fo)"/>
<path d="M2.5 15.2 Q2.5 14.2 3.5 14.2 H62.5 Q63.5 14.2 63.5 15.2 L62.4 50.4 Q62.3 51.6 61.2 51.6 H4.8 Q3.7 51.6 3.6 50.4 Z" fill="url(#fr)"/>
<path d="M3 15 H63 L62.75 24.2 Q33 31.4 3.45 36 Z" fill="#fff" opacity=".15"/>
<path d="M2.5 15.2 Q2.5 14.2 3.5 14.2 H62.5 Q63.5 14.2 63.5 15.2 L62.4 50.4 Q62.3 51.6 61.2 51.6 H4.8 Q3.7 51.6 3.6 50.4 Z" fill="none" stroke="#c24a18" stroke-width="1" opacity=".85"/>
<path d="M3.8 15.4 H62.2" stroke="#f6c9a0" stroke-width=".9" opacity=".8" fill="none"/>
</svg>
<div class="lbl" style="left:260.02px;top:486px;transform:scaleX(0.9556)">var</div>
<svg class="ico" style="left:355px;top:420px" width="52" height="64" viewBox="0 0 52 64">
<path d="M2.2 61.2 H49.8 V62.6 H2.2 Z" fill="#000" opacity=".16"/>
<path d="M2.5 2.6 H34.6 L49.5 14.8 V61 H2.5 Z" fill="url(#pg)" stroke="#a3a3a3" stroke-width="1"/>
<path d="M3.5 3.6 H34 L48.5 15.4 V60 H3.5 Z" fill="none" stroke="#fff" stroke-width="1" opacity=".7"/>
<path d="M8.6 13.1 h33.4" stroke="#8f8f8f" stroke-width="1.3" stroke-dasharray="4.6 .5 2.3 .5 3.4 .5 6 .5 1.7 .5"/><path d="M8.6 16.0 h28.5" stroke="#8f8f8f" stroke-width="1.3" stroke-dasharray="4.6 .5 5.6 .5 2.6 .5 2.4 .5 3.6 .5"/><path d="M8.6 18.5 h33.4" stroke="#8f8f8f" stroke-width="1.3" stroke-dasharray="1.4 .5 5.4 .5"/><path d="M8.6 21.2 h32" stroke="#8f8f8f" stroke-width="1.3" stroke-dasharray="3.2 .5 1.6 .4 1.2 .4 1.4 .5 2.6 .5 3.4 .5 2.2 .5"/><path d="M8.6 23.9 h10.5" stroke="#8f8f8f" stroke-width="1.3" stroke-dasharray="4.4 .5 5.2 .5 2.2 .5 4.8 .5 2.6 .4 1 .4 2.6 .5"/><path d="M8.6 29.4 h33.4" stroke="#8f8f8f" stroke-width="1.3" stroke-dasharray="3.2 .5 1.6 .4 1.2 .4 1.4 .5 2.6 .5 3.4 .5 2.2 .5"/><path d="M8.6 31.9 h32" stroke="#8f8f8f" stroke-width="1.3" stroke-dasharray="4.4 .5 5.2 .5 2.2 .5 4.8 .5 2.6 .4 1 .4 2.6 .5"/><path d="M8.6 34.6 h29" stroke="#8f8f8f" stroke-width="1.3" stroke-dasharray="4.6 .5 2.3 .5 3.4 .5 6 .5 1.7 .5"/><path d="M8.6 37.3 h32" stroke="#8f8f8f" stroke-width="1.3" stroke-dasharray="4.6 .5 5.6 .5 2.6 .5 2.4 .5 3.6 .5"/><path d="M8.6 40.0 h28" stroke="#8f8f8f" stroke-width="1.3" stroke-dasharray="1.4 .5 5.4 .5"/><path d="M8.6 45.3 h33.4" stroke="#8f8f8f" stroke-width="1.3" stroke-dasharray="4.6 .5 5.6 .5 2.6 .5 2.4 .5 3.6 .5"/><path d="M8.6 47.8 h28" stroke="#8f8f8f" stroke-width="1.3" stroke-dasharray="1.4 .5 5.4 .5"/><path d="M8.6 50.6 h31" stroke="#8f8f8f" stroke-width="1.3" stroke-dasharray="3.2 .5 1.6 .4 1.2 .4 1.4 .5 2.6 .5 3.4 .5 2.2 .5"/><path d="M8.6 53.4 h23" stroke="#8f8f8f" stroke-width="1.3" stroke-dasharray="4.4 .5 5.2 .5 2.2 .5 4.8 .5 2.6 .4 1 .4 2.6 .5"/>
<path d="M31.4 3.2 H34.6 Q35.8 9.4 34.2 13.6 Q40 12.4 49 14.6 L49 17.4 Q40 14.6 32.6 15.4 Q33.6 10 31.4 3.2 Z" fill="#000" opacity=".09"/>
<path d="M34.6 2.6 Q35.8 9.4 34.2 13.6 Q40 12.4 49.5 14.8 Z" fill="url(#pgf)" stroke="#a9a9a9" stroke-width=".8" stroke-linejoin="round"/>
</svg>
<div class="lbl" style="left:347.5px;top:486px;transform:scaleX(1.0649)">initrd.img</div>
<svg class="ico" style="left:467px;top:420px" width="52" height="64" viewBox="0 0 52 64">
<path d="M2.2 61.2 H49.8 V62.6 H2.2 Z" fill="#000" opacity=".09"/>
<path d="M2.5 2.6 H34.6 L49.5 14.8 V61 H2.5 Z" fill="#dddddd" stroke="#bcbcbc" stroke-width="1"/>
<path d="M3.5 3.6 H34 L48.5 15.4 V60 H3.5 Z" fill="none" stroke="#fff" stroke-width="1" opacity=".35"/>
<path d="M8.6 13.1 h33.4" stroke="#b0b0b0" stroke-width="1.3" stroke-dasharray="4.6 .5 2.3 .5 3.4 .5 6 .5 1.7 .5"/><path d="M8.6 16.0 h28.5" stroke="#b0b0b0" stroke-width="1.3" stroke-dasharray="4.6 .5 5.6 .5 2.6 .5 2.4 .5 3.6 .5"/><path d="M8.6 18.5 h33.4" stroke="#b0b0b0" stroke-width="1.3" stroke-dasharray="1.4 .5 5.4 .5"/><path d="M8.6 21.2 h32" stroke="#b0b0b0" stroke-width="1.3" stroke-dasharray="3.2 .5 1.6 .4 1.2 .4 1.4 .5 2.6 .5 3.4 .5 2.2 .5"/><path d="M8.6 23.9 h10.5" stroke="#b0b0b0" stroke-width="1.3" stroke-dasharray="4.4 .5 5.2 .5 2.2 .5 4.8 .5 2.6 .4 1 .4 2.6 .5"/><path d="M8.6 29.4 h33.4" stroke="#b0b0b0" stroke-width="1.3" stroke-dasharray="3.2 .5 1.6 .4 1.2 .4 1.4 .5 2.6 .5 3.4 .5 2.2 .5"/><path d="M8.6 31.9 h32" stroke="#b0b0b0" stroke-width="1.3" stroke-dasharray="4.4 .5 5.2 .5 2.2 .5 4.8 .5 2.6 .4 1 .4 2.6 .5"/><path d="M8.6 34.6 h29" stroke="#b0b0b0" stroke-width="1.3" stroke-dasharray="4.6 .5 2.3 .5 3.4 .5 6 .5 1.7 .5"/><path d="M8.6 37.3 h32" stroke="#b0b0b0" stroke-width="1.3" stroke-dasharray="4.6 .5 5.6 .5 2.6 .5 2.4 .5 3.6 .5"/><path d="M8.6 40.0 h28" stroke="#b0b0b0" stroke-width="1.3" stroke-dasharray="1.4 .5 5.4 .5"/><path d="M8.6 45.3 h33.4" stroke="#b0b0b0" stroke-width="1.3" stroke-dasharray="4.6 .5 5.6 .5 2.6 .5 2.4 .5 3.6 .5"/><path d="M8.6 47.8 h28" stroke="#b0b0b0" stroke-width="1.3" stroke-dasharray="1.4 .5 5.4 .5"/><path d="M8.6 50.6 h31" stroke="#b0b0b0" stroke-width="1.3" stroke-dasharray="3.2 .5 1.6 .4 1.2 .4 1.4 .5 2.6 .5 3.4 .5 2.2 .5"/><path d="M8.6 53.4 h23" stroke="#b0b0b0" stroke-width="1.3" stroke-dasharray="4.4 .5 5.2 .5 2.2 .5 4.8 .5 2.6 .4 1 .4 2.6 .5"/>
<path d="M31.4 3.2 H34.6 Q35.8 9.4 34.2 13.6 Q40 12.4 49 14.6 L49 17.4 Q40 14.6 32.6 15.4 Q33.6 10 31.4 3.2 Z" fill="#000" opacity=".09"/>
<path d="M34.6 2.6 Q35.8 9.4 34.2 13.6 Q40 12.4 49.5 14.8 Z" fill="url(#pgf2)" stroke="#bdbdbd" stroke-width=".8" stroke-linejoin="round"/>
</svg>
<svg class="ico" style="left:493px;top:468px" width="28" height="18" viewBox="0 0 28 18">
<path d="M12.4 3.1 H24 V15 L19.9 11.2 Q14 17.2 8.4 16 Q4 14.6 2.6 7.2 Q7.2 12.4 11.6 9.8 Q14.4 8 16.4 6.6 Z" fill="url(#ar)"/>
</svg>
<div class="lbl" style="left:446.55px;top:486px;transform:scaleX(1.0552)">initrd.img.old</div>
<svg class="ico" style="left:579px;top:420px" width="52" height="64" viewBox="0 0 52 64">
<path d="M2.2 61.2 H49.8 V62.6 H2.2 Z" fill="#000" opacity=".16"/>
<path d="M2.5 2.6 H34.6 L49.5 14.8 V61 H2.5 Z" fill="url(#pg)" stroke="#a3a3a3" stroke-width="1"/>
<path d="M3.5 3.6 H34 L48.5 15.4 V60 H3.5 Z" fill="none" stroke="#fff" stroke-width="1" opacity=".7"/>
<g class="dgt"><text x="8.6" y="16.9">1</text><text x="8.6" y="29.1">10</text><text x="8.6" y="41.3">101</text><text x="8.6" y="53.5">1010</text></g>
<path d="M31.4 3.2 H34.6 Q35.8 9.4 34.2 13.6 Q40 12.4 49 14.6 L49 17.4 Q40 14.6 32.6 15.4 Q33.6 10 31.4 3.2 Z" fill="#000" opacity=".09"/>
<path d="M34.6 2.6 Q35.8 9.4 34.2 13.6 Q40 12.4 49.5 14.8 Z" fill="url(#pgf)" stroke="#a9a9a9" stroke-width=".8" stroke-linejoin="round"/>
</svg>
<svg class="ico" style="left:606px;top:455px" width="30" height="30" viewBox="0 0 30 30">
<rect x="1.2" y="1.2" width="27.4" height="27.4" rx="2.4" fill="url(#em)" stroke="#a9aba3" stroke-width="1"/>
<rect x="1.2" y="27" width="27.4" height="1.8" rx="1" fill="#7d7f78" opacity=".6"/>
<path d="M7.6 8 L22 22 M22 8 L7.6 22" stroke="#fff" stroke-width="3.3" stroke-linecap="butt"/>
</svg>
<div class="lbl" style="left:576.88px;top:486px;transform:scaleX(1.003)">swapfile</div>
<svg class="ico" style="left:687px;top:423px" width="60" height="60" viewBox="0 0 60 60">
<clipPath id="dc"><path d="M30 1.9 Q31 1.9 31.8 2.7 L57.6 28.5 Q58.4 30.3 57.6 31.1 L31.8 56.9 Q30 58.4 28.2 56.9 L2.4 31.1 Q1.6 30.3 2.4 28.5 L28.2 2.7 Q29 1.9 30 1.9 Z"/></clipPath>
<path d="M30 1.9 Q31 1.9 31.8 2.7 L57.6 28.5 Q58.4 30.3 57.6 31.1 L31.8 56.9 Q30 58.4 28.2 56.9 L2.4 31.1 Q1.6 30.3 2.4 28.5 L28.2 2.7 Q29 1.9 30 1.9 Z" fill="url(#dm)"/>
<g clip-path="url(#dc)">
<path d="M30 0 L60 30 L30 30 Z" fill="#a6a8e4" opacity=".35"/>
<path d="M35.18 16.96 L37.14 17.53 L36.99 19.01 L34.94 19.15 L34.67 20.47 L36.50 21.39 L36.08 22.81 L34.04 22.57 L33.53 23.82 L35.16 25.06 L34.48 26.39 L32.53 25.78 L31.80 26.91 L33.17 28.43 L32.26 29.61 L30.45 28.65 L29.52 29.63 L30.60 31.37 L29.48 32.36 L27.88 31.08 L26.79 31.88 L27.52 33.80 L26.25 34.56 L24.90 33.01 L23.69 33.59 L24.06 35.61 L22.66 36.13 L21.63 34.36 L20.32 34.71 L20.32 36.76 L18.85 37.01 L18.16 35.08 L16.81 35.18 L16.43 37.20 L14.94 37.17 L14.62 35.15 L13.28 35.01 L12.53 36.91 L11.07 36.62 L11.12 34.57 L9.83 34.18 L8.74 35.92 L7.36 35.36 L7.79 33.36 L6.59 32.74 L5.21 34.25 L3.95 33.44 L4.74 31.55 L3.68 30.72 L2.04 31.95 L0.95 30.93 L2.08 29.22 L1.18 28.21 L-0.66 29.12 L-1.54 27.91 L-0.12 26.44 L-0.81 25.28 L-2.78 25.83 L-3.43 24.49 L-1.76 23.30 L-2.23 22.03 L-4.27 22.21 L-4.66 20.78 L-2.80 19.91 L-3.03 18.58 L-5.07 18.38 L-5.18 16.90 L-3.20 16.39 L-3.18 15.04 L-5.14 14.47 L-4.99 12.99 L-2.94 12.85 L-2.67 11.53 L-4.50 10.61 L-4.08 9.19 L-2.04 9.43 L-1.53 8.18 L-3.16 6.94 L-2.48 5.61 L-0.53 6.22 L0.20 5.09 L-1.17 3.57 L-0.26 2.39 L1.55 3.35 L2.48 2.37 L1.40 0.63 L2.52 -0.36 L4.12 0.92 L5.21 0.12 L4.48 -1.80 L5.75 -2.56 L7.10 -1.01 L8.31 -1.59 L7.94 -3.61 L9.34 -4.13 L10.37 -2.36 L11.68 -2.71 L11.68 -4.76 L13.15 -5.01 L13.84 -3.08 L15.19 -3.18 L15.57 -5.20 L17.06 -5.17 L17.38 -3.15 L18.72 -3.01 L19.47 -4.91 L20.93 -4.62 L20.88 -2.57 L22.17 -2.18 L23.26 -3.92 L24.64 -3.36 L24.21 -1.36 L25.41 -0.74 L26.79 -2.25 L28.05 -1.44 L27.26 0.45 L28.32 1.28 L29.96 0.05 L31.05 1.07 L29.92 2.78 L30.82 3.79 L32.66 2.88 L33.54 4.09 L32.12 5.56 L32.81 6.72 L34.78 6.17 L35.43 7.51 L33.76 8.70 L34.23 9.97 L36.27 9.79 L36.66 11.22 L34.80 12.09 L35.03 13.42 L37.07 13.62 L37.18 15.10 L35.20 15.61 Z" fill="url(#dg)" opacity=".8"/>
<path d="M87.35 45.70 L90.09 46.65 L89.78 49.12 L86.89 49.36 L86.38 51.56 L88.86 53.06 L88.04 55.40 L85.17 55.04 L84.21 57.09 L86.32 59.07 L85.04 61.19 L82.30 60.24 L80.93 62.04 L82.59 64.42 L80.89 66.23 L78.41 64.73 L76.70 66.21 L77.83 68.88 L75.79 70.30 L73.68 68.31 L71.70 69.40 L72.25 72.25 L69.96 73.21 L68.30 70.83 L66.14 71.49 L66.08 74.39 L63.65 74.85 L62.52 72.18 L60.27 72.37 L59.61 75.19 L57.13 75.14 L56.59 72.30 L54.34 72.02 L53.11 74.64 L50.69 74.07 L50.75 71.18 L48.62 70.44 L46.87 72.75 L44.62 71.69 L45.28 68.87 L43.35 67.70 L41.16 69.60 L39.18 68.10 L40.41 65.47 L38.77 63.93 L36.23 65.33 L34.60 63.45 L36.36 61.14 L35.06 59.29 L32.29 60.13 L31.09 57.95 L33.29 56.06 L32.41 53.97 L29.52 54.22 L28.80 51.84 L31.34 50.45 L30.92 48.23 L28.04 47.87 L27.83 45.39 L30.61 44.56 L30.65 42.30 L27.91 41.35 L28.22 38.88 L31.11 38.64 L31.62 36.44 L29.14 34.94 L29.96 32.60 L32.83 32.96 L33.79 30.91 L31.68 28.93 L32.96 26.81 L35.70 27.76 L37.07 25.96 L35.41 23.58 L37.11 21.77 L39.59 23.27 L41.30 21.79 L40.17 19.12 L42.21 17.70 L44.32 19.69 L46.30 18.60 L45.75 15.75 L48.04 14.79 L49.70 17.17 L51.86 16.51 L51.92 13.61 L54.35 13.15 L55.48 15.82 L57.73 15.63 L58.39 12.81 L60.87 12.86 L61.41 15.70 L63.66 15.98 L64.89 13.36 L67.31 13.93 L67.25 16.82 L69.38 17.56 L71.13 15.25 L73.38 16.31 L72.72 19.13 L74.65 20.30 L76.84 18.40 L78.82 19.90 L77.59 22.53 L79.23 24.07 L81.77 22.67 L83.40 24.55 L81.64 26.86 L82.94 28.71 L85.71 27.87 L86.91 30.05 L84.71 31.94 L85.59 34.03 L88.48 33.78 L89.20 36.16 L86.66 37.55 L87.08 39.77 L89.96 40.13 L90.17 42.61 L87.39 43.44 Z" fill="#dcd5ee"/>
<circle cx="59" cy="44" r="24.4" fill="url(#dm2)"/>
<path d="M59 44 L34 30 M59 44 L30 52" stroke="#8d78b4" stroke-width="4.5" opacity=".55"/>
</g>
<path d="M30 1.9 Q31 1.9 31.8 2.7 L57.6 28.5 Q58.4 30.3 57.6 31.1 L31.8 56.9 Q30 58.4 28.2 56.9 L2.4 31.1 Q1.6 30.3 2.4 28.5 L28.2 2.7 Q29 1.9 30 1.9 Z" fill="none" stroke="#8a6aa8" stroke-width=".8" opacity=".6"/>
</svg>
<svg class="ico" style="left:717px;top:468px" width="28" height="18" viewBox="0 0 28 18">
<path d="M12.4 3.1 H24 V15 L19.9 11.2 Q14 17.2 8.4 16 Q4 14.6 2.6 7.2 Q7.2 12.4 11.6 9.8 Q14.4 8 16.4 6.6 Z" fill="url(#ar)"/>
</svg>
<div class="lbl" style="left:693.06px;top:486px;transform:scaleX(0.9735)">vmlinuz</div>
</div>
</body>
</html>
